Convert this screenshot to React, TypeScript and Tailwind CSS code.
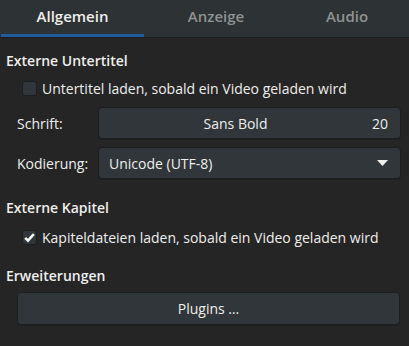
import { useState } from "react";

function Checkbox({ checked }: { checked: boolean }) {
  return (
    <span className="flex h-[15px] w-[15px] items-center justify-center rounded-[3px] border border-[#1b1f20] bg-[#30363a]">
      {checked ? (
        <svg width="13" height="13" viewBox="0 0 13 13">
          <path d="M2.2 6.8 L5 9.6 L10.8 3.2" fill="none" stroke="#f4f4f3" strokeWidth="2.6" />
        </svg>
      ) : null}
    </span>
  );
}

export default function App() {
  const [tab, setTab] = useState(0);
  const tabs = [
    { label: "Allgemein", w: "w-[143px]" },
    { label: "Anzeige", w: "w-[144px]" },
    { label: "Audio", w: "w-[118px]" },
  ];

  return (
    <div className="h-[346px] w-[409px] overflow-hidden bg-[#252525] font-['Open_Sans',sans-serif] text-[14px] text-[#eeeeec]">
      <div className="flex h-[38px] border-b border-[#1c1f20] bg-[#2d3234] pl-[1px]">
        {tabs.map((t, i) => (
          <button
            key={t.label}
            onClick={() => setTab(i)}
            className={`${t.w} flex items-center justify-center border-b-[3px] pb-[1px] text-[15px] font-semibold ${
              tab === i
                ? "border-[#215d9c] text-[#eeeeec]"
                : "border-transparent text-[#8f9191]"
            }`}
          >
            {t.label}
          </button>
        ))}
      </div>

      <div className="flex flex-col px-[6px]">
        <div className="mt-[13px] font-semibold leading-[20px]">Externe Untertitel</div>
        <label className="mt-[7px] flex h-[20px] items-center gap-[5px] pl-[16px]">
          <Checkbox checked={false} />
          <span>Untertitel laden, sobald ein Video geladen wird</span>
        </label>

        <div className="mt-[9px] grid grid-cols-[81px_1fr] gap-y-[8px] pl-[11px] pr-[2px]">
          <div className="flex items-center">Schrift:</div>
          <button className="flex h-[32px] items-center rounded-[4px] border border-[#1b1f20] bg-[#30363a] px-[12px] shadow-[0_1px_0_rgba(0,0,0,0.15)]">
            <span className="flex-1 text-center">Sans Bold</span>
            <span className="ml-[12px]">20</span>
          </button>

          <div className="flex items-center">Kodierung:</div>
          <button className="flex h-[32px] items-center rounded-[4px] border border-[#1b1f20] bg-[#30363a] pl-[10px] pr-[12px] shadow-[0_1px_0_rgba(0,0,0,0.15)]">
            <span className="flex-1 text-left">Unicode (UTF-8)</span>
            <svg width="11" height="6" viewBox="0 0 11 6">
              <path d="M0 0 H11 L5.5 6 Z" fill="#eeeeec" />
            </svg>
          </button>
        </div>

        <div className="mt-[19px] font-semibold leading-[20px]">Externe Kapitel</div>
        <label className="mt-[9px] flex h-[20px] items-center gap-[5px] pl-[16px]">
          <Checkbox checked={true} />
          <span>Kapiteldateien laden, sobald ein Video geladen wird</span>
        </label>

        <div className="mt-[19px] font-semibold leading-[20px]">Erweiterungen</div>
        <button className="mt-[6px] ml-[11px] mr-[3px] flex h-[33px] items-center justify-center rounded-[4px] border border-[#1b1f20] bg-[#30363a] shadow-[0_1px_0_rgba(0,0,0,0.15)]">
          Plugins …
        </button>
      </div>
    </div>
  );
}
